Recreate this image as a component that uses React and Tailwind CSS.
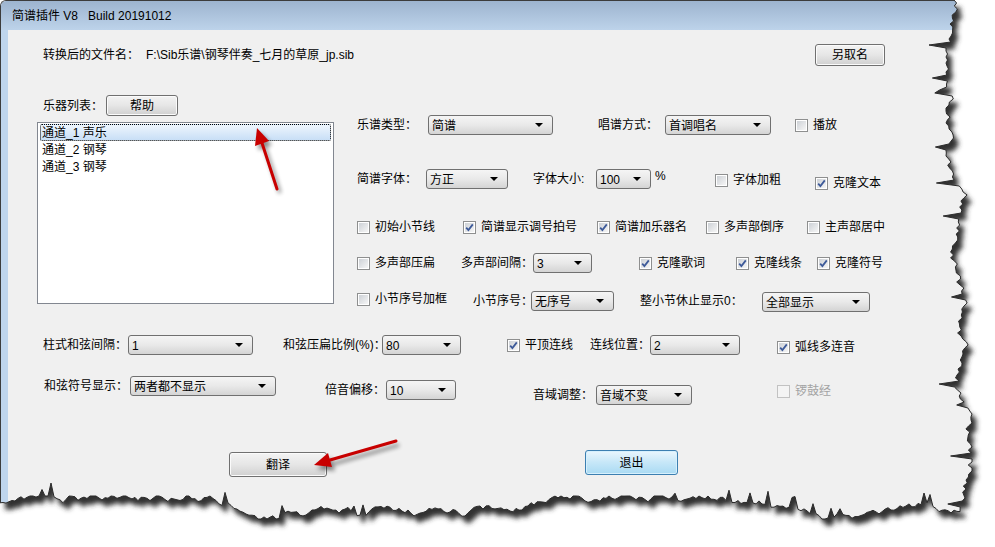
import React from 'react';

// deterministic torn-paper edge
const rnd = (() => {
  let s = 48271;
  return () => (s = (s * 16807) % 2147483647) / 2147483647;
})();

const tornPts = (() => {
  const pts = [];
  let x = 955;
  for (let y = 0; y <= 507; y += 3) {
    x += (rnd() - 0.5) * 8;
    x = Math.max(946, Math.min(972, x));
    let px = x;
    if (rnd() < 0.08) px -= 8 + rnd() * 12;
    pts.push([px, y]);
  }
  let y = 509;
  for (let xx = Math.round(x); xx >= 0; xx -= 3) {
    y += (rnd() - 0.5) * 7;
    y = Math.max(496, Math.min(519, y));
    let py = y;
    if (rnd() < 0.05) py -= 6 + rnd() * 9;
    pts.push([xx, py]);
  }
  pts.push([0, y]);
  return pts;
})();

const tornLine = tornPts.map(([x, y], i) => `${i ? 'L' : 'M'}${x.toFixed(1)} ${y.toFixed(1)}`).join(' ');
const windowShape = `M0 0 L${tornPts.map(([x, y]) => `${x.toFixed(1)} ${y.toFixed(1)}`).join(' L')} Z`;

const Select = ({ className = '', value }) => (
  <div className={`flex items-center h-[20px] shrink-0 rounded-[3px] border border-[#707070] bg-linear-to-b from-[#f5f5f5] via-[#e9e9e9] to-[#d4d4d4] pl-[3px] ${className}`}>
    <span className="pt-[2px] leading-none whitespace-nowrap">{value}</span>
    <span className="ml-auto mr-[9px] border-x-[4px] border-x-transparent border-t-[4px] border-t-black" />
  </div>
);

const Check = ({ checked, disabled, label, className = '' }) => (
  <div className={`flex items-center shrink-0 whitespace-nowrap ${className}`}>
    <span
      className={`w-[13px] h-[13px] border flex items-center justify-center ${
        disabled ? 'border-[#c2c2c2] bg-[#f4f4f4]' : 'border-[#8e8f8f] bg-white'
      }`}
    >
      <span
        className={`w-[9px] h-[9px] flex items-center justify-center ${
          disabled ? '' : 'bg-linear-to-br from-[#cdd1d6] to-[#f6f6f6]'
        }`}
      >
        {checked && (
          <svg width="9" height="9" viewBox="0 0 9 9">
            <path d="M1.2 4.6 L3.4 7 L7.8 1.4" fill="none" stroke="#3d5a99" strokeWidth="1.8" />
          </svg>
        )}
      </span>
    </span>
    <span className={`ml-[5px] ${disabled ? 'text-[#a3a3a3]' : ''}`}>{label}</span>
  </div>
);

const Button = ({ className = '', focused, children }) => (
  <div
    className={`flex items-center justify-center shrink-0 rounded-[3px] border ${
      focused
        ? 'border-[#3c7fb1] bg-linear-to-b from-[#eaf6fd] via-[#c6e7f8] to-[#a9daf3] shadow-[inset_0_0_0_1px_#d6f0fd]'
        : 'border-[#707070] bg-linear-to-b from-[#f3f3f3] via-[#e6e6e6] to-[#d0d0d0] shadow-[inset_0_0_0_1px_#fbfbfb]'
    } ${className}`}
  >
    {children}
  </div>
);

const Label = ({ className = '', children }) => (
  <span className={`shrink-0 whitespace-nowrap ${className}`}>{children}</span>
);

const Arrow = ({ tail, tip, base1, base2, baseMid }) => (
  <>
    <g transform="translate(3,4)" opacity="0.45" filter="url(#ashadow)">
      <line x1={tail[0]} y1={tail[1]} x2={baseMid[0]} y2={baseMid[1]} stroke="#000" strokeWidth="3" />
      <polygon points={`${tip.join(',')} ${base1.join(',')} ${base2.join(',')}`} fill="#000" />
    </g>
    <line x1={tail[0]} y1={tail[1]} x2={baseMid[0]} y2={baseMid[1]} stroke="#c80000" strokeWidth="3" strokeLinecap="round" />
    <polygon points={`${tip.join(',')} ${base1.join(',')} ${base2.join(',')}`} fill="#c80000" />
  </>
);

export default function App() {
  return (
    <div className="relative w-[995px] h-[547px] overflow-hidden bg-white text-[12px] text-black font-['Liberation_Sans','Noto_Sans_CJK_SC',sans-serif]">
      <div className="w-[976px] h-[524px] flex flex-col rounded-tl-[6px] border-l border-t border-[#3c3c3c] overflow-hidden">
        <div className="h-[29px] shrink-0 flex items-center pl-[11px] whitespace-pre bg-linear-to-b from-[#9db4cf] to-[#bdd3ea]">
          简谱插件 V8   Build 20191012
        </div>
        <div className="flex flex-1">
          <div className="w-[7px] bg-[#bfd5ec]" />
          <div className="flex-1 bg-[#f0f0f0] flex flex-col">
            {/* file name */}
            <div className="mt-[14px] ml-[35px] h-[22px] flex items-center">
              <div className="w-[772px] flex items-center">
                <Label className="w-[103px]">转换后的文件名：</Label>
                <span>F:\Sib乐谱\钢琴伴奏_七月的草原_jp.sib</span>
              </div>
              <Button className="w-[70px] h-[22px]">另取名</Button>
            </div>

            {/* list + options */}
            <div className="mt-[29px] flex items-start">
              <div className="ml-[29px] w-[297px]">
                <div className="h-[21px] flex items-center">
                  <Label className="ml-[6px] w-[63px]">乐器列表：</Label>
                  <Button className="w-[72px] h-[21px]">帮助</Button>
                </div>
                <div className="mt-[6px] h-[182px] border border-[#828790] bg-white pt-[1px] px-[2px]">
                  <div className="h-[17px] flex items-center pl-[1px] rounded-[2px] border border-dotted border-black bg-linear-to-b from-[#eef5fd] to-[#c8dff6]">
                    通道_1 声乐
                  </div>
                  <div className="h-[17px] flex items-center pl-[2px]">通道_2 钢琴</div>
                  <div className="h-[17px] flex items-center pl-[2px]">通道_3 钢琴</div>
                </div>
              </div>

              <div className="ml-[23px] mt-[20px] flex flex-col">
                <div className="h-[20px] flex items-center">
                  <Label className="w-[71px]">乐谱类型：</Label>
                  <Select className="w-[125px]" value="简谱" />
                  <Label className="ml-[45px] w-[67px]">唱谱方式：</Label>
                  <Select className="w-[106px]" value="首调唱名" />
                  <Check className="ml-[24px]" label="播放" />
                </div>

                <div className="mt-[34px] h-[20px] flex items-center">
                  <Label className="w-[69px]">简谱字体：</Label>
                  <Select className="w-[82px]" value="方正" />
                  <Label className="ml-[25px] w-[63px]">字体大小:</Label>
                  <Select className="w-[55px]" value="100" />
                  <Label className="w-[64px] pl-[4px] -translate-y-[3px]">%</Label>
                  <Check className="w-[100px] translate-y-[1px]" label="字体加粗" />
                  <Check className="translate-y-[4px]" checked label="克隆文本" />
                </div>

                <div className="mt-[28px] h-[20px] flex items-center">
                  <Check className="w-[106px]" label="初始小节线" />
                  <Check className="w-[134px]" checked label="简谱显示调号拍号" />
                  <Check className="w-[109px]" checked label="简谱加乐器名" />
                  <Check className="w-[101px]" label="多声部倒序" />
                  <Check label="主声部居中" />
                </div>

                <div className="mt-[16px] h-[20px] flex items-center">
                  <Check className="w-[104px]" label="多声部压扁" />
                  <Label className="w-[72px]">多声部间隔：</Label>
                  <Select className="w-[59px]" value="3" />
                  <Check className="ml-[47px] w-[97px]" checked label="克隆歌词" />
                  <Check className="w-[81px]" checked label="克隆线条" />
                  <Check checked label="克隆符号" />
                </div>

                <div className="mt-[18px] h-[20px] flex items-center">
                  <Check className="w-[116px] -translate-y-[2px]" label="小节序号加框" />
                  <Label className="w-[58px]">小节序号：</Label>
                  <Select className="w-[83px]" value="无序号" />
                  <Label className="ml-[26px] w-[122px]">整小节休止显示0：</Label>
                  <Select className="w-[108px] translate-y-[1px]" value="全部显示" />
                </div>
              </div>
            </div>

            {/* chord rows */}
            <div className="mt-[24px] ml-[35px] h-[20px] flex items-center">
              <Label className="w-[85px]">柱式和弦间隔：</Label>
              <Select className="w-[125px]" value="1" />
              <Label className="ml-[30px] w-[99px]">和弦压扁比例(%)：</Label>
              <Select className="w-[79px]" value="80" />
              <Check className="ml-[46px] w-[83px]" checked label="平顶连线" />
              <Label className="w-[60px]">连线位置：</Label>
              <Select className="w-[90px]" value="2" />
              <Check className="ml-[37px] translate-y-[2px]" checked label="弧线多连音" />
            </div>

            <div className="mt-[21px] ml-[36px] flex items-start">
              <Label className="w-[86px] leading-[20px]">和弦符号显示：</Label>
              <Select className="w-[146px]" value="两者都不显示" />
              <Label className="ml-[49px] w-[61px] mt-[4px] leading-[20px]">倍音偏移：</Label>
              <Select className="w-[70px] mt-[4px]" value="10" />
              <Label className="ml-[77px] w-[63px] mt-[9px] leading-[20px]">音域调整：</Label>
              <Select className="w-[96px] mt-[9px]" value="音域不变" />
              <Check className="ml-[85px] mt-[6px]" disabled label="锣鼓经" />
            </div>

            {/* action buttons */}
            <div className="mt-[45px] flex items-start">
              <Button className="ml-[221px] mt-[2px] w-[98px] h-[25px]">翻译</Button>
              <Button focused className="ml-[258px] w-[93px] h-[25px]">退出</Button>
            </div>
          </div>
        </div>
      </div>

      <svg className="absolute inset-0 pointer-events-none" width="995" height="547">
        <defs>
          <clipPath id="outside">
            <path clipRule="evenodd" d={`M0 0H995V547H0Z ${windowShape}`} />
          </clipPath>
          <filter id="eblur" x="-5%" y="-5%" width="110%" height="110%">
            <feGaussianBlur stdDeviation="2.4" />
          </filter>
          <filter id="ashadow" x="-50%" y="-50%" width="200%" height="200%">
            <feGaussianBlur stdDeviation="2" />
          </filter>
        </defs>
        <Arrow tail={[277, 189]} tip={[257, 128]} base1={[269, 141]} base2={[255, 146]} baseMid={[262, 143]} />
        <Arrow tail={[396, 441]} tip={[314, 465]} base1={[332, 467]} base2={[328, 453]} baseMid={[330, 460]} />
        <g clipPath="url(#outside)">
          <rect width="995" height="547" fill="#fff" />
          <path d={windowShape} transform="translate(5,7)" fill="#333" filter="url(#eblur)" />
        </g>
        <path d={tornLine} fill="none" stroke="#2b2b2b" strokeWidth="1" />
      </svg>
    </div>
  );
}
